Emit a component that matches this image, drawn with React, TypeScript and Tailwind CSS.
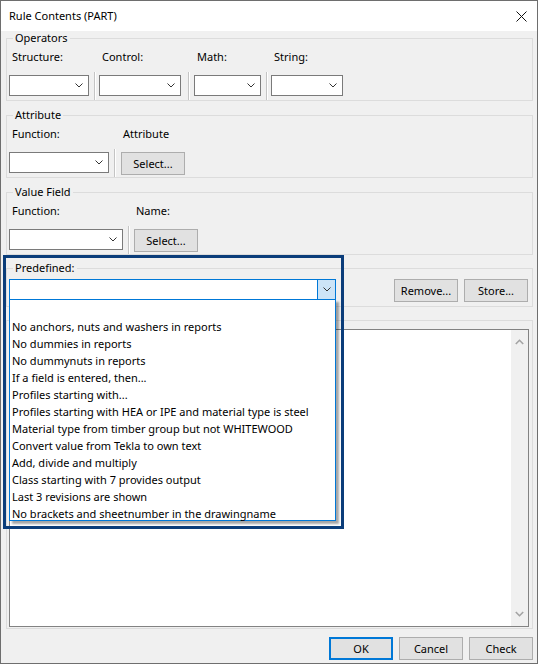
import React from "react";

const items = [
  "",
  "No anchors, nuts and washers in reports",
  "No dummies in reports",
  "No dummynuts in reports",
  "If a field is entered, then...",
  "Profiles starting with...",
  "Profiles starting with HEA or IPE and material type is steel",
  "Material type from timber group but not WHITEWOOD",
  "Convert value from Tekla to own text",
  "Add, divide and multiply",
  "Class starting with 7 provides output",
  "Last 3 revisions are shown",
  "No brackets and sheetnumber in the drawingname",
];

function Chevron({ color = "#333333" }: { color?: string }) {
  return (
    <svg width="8" height="5" viewBox="0 0 8 5" fill="none">
      <path d="M0.5 0.5 L4 4 L7.5 0.5" stroke={color} strokeWidth="1" />
    </svg>
  );
}

function Combo({ className }: { className: string }) {
  return (
    <div
      className={`h-[21px] bg-white border border-[#7a7a7a] flex items-center justify-end pr-[5px] ${className}`}
    >
      <Chevron />
    </div>
  );
}

function Btn({ label, className = "" }: { label: string; className?: string }) {
  return (
    <div
      className={`h-[23px] w-[64px] bg-[#e1e1e1] border border-[#adadad] flex items-center justify-center ${className}`}
    >
      {label}
    </div>
  );
}

function Sep({ className = "" }: { className?: string }) {
  return <div className={`w-[2px] self-stretch border-l border-[#c4c4c4] border-r border-r-white ${className}`} />;
}

function Legend({ text }: { text: string }) {
  return <legend className="ml-[6px] px-[2px] leading-[14px]">{text}</legend>;
}

export default function App() {
  return (
    <div className="relative w-[538px] h-[664px] border border-[#6e6e6e] bg-[#f0f0f0] text-[11px] text-black font-['Noto_Sans',sans-serif] leading-[16px] overflow-hidden">
      {/* title bar */}
      <div className="h-[30px] bg-white flex items-center justify-between pl-[8px] pr-[10px]">
        <span>Rule Contents (PART)</span>
        <svg width="11" height="11" viewBox="0 0 11 11" fill="none">
          <path d="M0.5 0.5 L10.5 10.5 M10.5 0.5 L0.5 10.5" stroke="#111" strokeWidth="1" />
        </svg>
      </div>

      <div className="pl-[5px] pr-[4px]">
        {/* Operators */}
        <fieldset className="border border-[#dcdcdc]">
          <Legend text="Operators" />
          <div className="flex pt-[4px] pl-[5px]">
            <span className="w-[90px]">Structure:</span>
            <span className="w-[95px]">Control:</span>
            <span className="w-[77px]">Math:</span>
            <span>String:</span>
          </div>
          <div className="flex mt-[7px] pl-[2px] h-[28px]">
            <Combo className="w-[80px] mt-[3px]" />
            <Sep className="ml-[5px]" />
            <Combo className="w-[82px] mt-[3px] ml-[3px]" />
            <Sep className="ml-[7px]" />
            <Combo className="w-[67px] mt-[3px] ml-[4px]" />
            <Sep className="ml-[5px]" />
            <Combo className="w-[72px] mt-[3px] ml-[3px]" />
          </div>
        </fieldset>

        {/* Attribute */}
        <fieldset className="border border-[#dcdcdc] mt-[7px]">
          <Legend text="Attribute" />
          <div className="flex pt-[4px] pl-[5px]">
            <span className="w-[111px]">Function:</span>
            <span>Attribute</span>
          </div>
          <div className="flex mt-[7px] pl-[2px] h-[28px]">
            <Combo className="w-[100px] mt-[3px]" />
            <Sep className="ml-[5px]" />
            <Btn label="Select..." className="mt-[3px] ml-[5px]" />
          </div>
        </fieldset>

        {/* Value Field */}
        <fieldset className="border border-[#dcdcdc] mt-[7px]">
          <Legend text="Value Field" />
          <div className="flex pt-[4px] pl-[5px]">
            <span className="w-[124px]">Function:</span>
            <span>Name:</span>
          </div>
          <div className="flex mt-[7px] pl-[2px] h-[28px]">
            <Combo className="w-[114px] mt-[3px]" />
            <Sep className="ml-[5px]" />
            <Btn label="Select..." className="mt-[3px] ml-[4px]" />
          </div>
        </fieldset>

        {/* Predefined */}
        <fieldset className="border border-[#dcdcdc] mt-[6px]">
          <Legend text="Predefined:" />
          <div className="flex items-start pl-[2px] pt-[4px] pb-[4px]">
            <div className="w-[327px] h-[21px] bg-white border border-[#0078d7] flex justify-end">
              <div className="w-[18px] h-full bg-[#cce4f7] border-l border-[#0078d7] flex items-center justify-center">
                <Chevron />
              </div>
            </div>
            <Btn label="Remove..." className="ml-[58px]" />
            <Btn label="Store..." className="ml-[6px]" />
          </div>
        </fieldset>

        {/* rule text */}
        <fieldset className="border border-[#dcdcdc] mt-[13px] pt-[8px] pl-[2px] pb-[1px]">
          <div className="w-[520px] h-[298px] bg-white border border-[#828282] flex justify-end">
            <div className="w-[17px] h-full bg-[#f0f0f0] flex flex-col items-center justify-between py-[9px]">
              <svg width="9" height="6" viewBox="0 0 9 6" fill="none">
                <path d="M0.8 5 L4.5 1.3 L8.2 5" stroke="#a3a3a3" strokeWidth="1.6" />
              </svg>
              <svg width="9" height="6" viewBox="0 0 9 6" fill="none">
                <path d="M0.8 1 L4.5 4.7 L8.2 1" stroke="#a3a3a3" strokeWidth="1.6" />
              </svg>
            </div>
          </div>
        </fieldset>

        <div className="flex justify-end mt-[8px]">
          <div className="h-[23px] w-[64px] bg-[#e1e1e1] border-2 border-[#0078d7] flex items-center justify-center">
            OK
          </div>
          <Btn label="Cancel" className="ml-[6px]" />
          <Btn label="Check" className="ml-[6px]" />
        </div>
      </div>

      {/* open dropdown list */}
      <div className="absolute left-[8px] top-[298px] w-[327px] h-[222px] bg-white border border-[#0078d7] shadow-[3px_3px_2px_rgba(0,0,0,0.35)] pt-[1px]">
        {items.map((t, i) => (
          <div key={i} className="h-[17px] leading-[17px] pl-[2px] whitespace-nowrap">
            {t}
          </div>
        ))}
      </div>

      {/* highlight frame */}
      <div className="absolute left-[2px] top-[254px] w-[341px] h-[274px] border-[3px] border-[#0b3d7a] pointer-events-none" />
    </div>
  );
}
